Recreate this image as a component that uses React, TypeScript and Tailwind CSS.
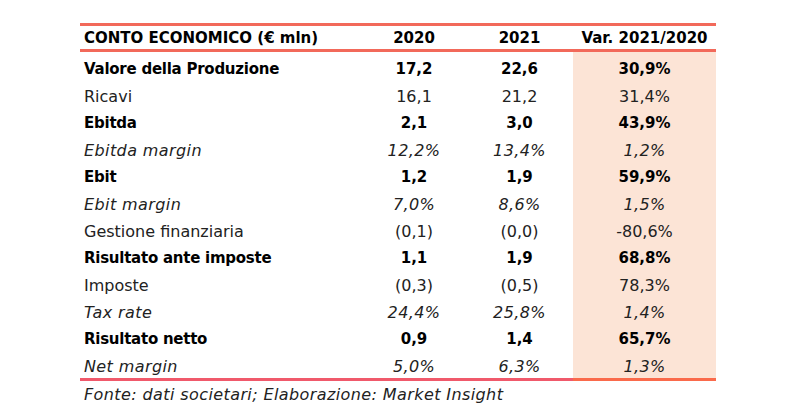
import React from "react";

type Row = { label: string; a: string; b: string; v: string; kind: "bold" | "normal" | "italic" };

const rows: Row[] = [
  { label: "Valore della Produzione", a: "17,2", b: "22,6", v: "30,9%", kind: "bold" },
  { label: "Ricavi", a: "16,1", b: "21,2", v: "31,4%", kind: "normal" },
  { label: "Ebitda", a: "2,1", b: "3,0", v: "43,9%", kind: "bold" },
  { label: "Ebitda margin", a: "12,2%", b: "13,4%", v: "1,2%", kind: "italic" },
  { label: "Ebit", a: "1,2", b: "1,9", v: "59,9%", kind: "bold" },
  { label: "Ebit margin", a: "7,0%", b: "8,6%", v: "1,5%", kind: "italic" },
  { label: "Gestione finanziaria", a: "(0,1)", b: "(0,0)", v: "-80,6%", kind: "normal" },
  { label: "Risultato ante imposte", a: "1,1", b: "1,9", v: "68,8%", kind: "bold" },
  { label: "Imposte", a: "(0,3)", b: "(0,5)", v: "78,3%", kind: "normal" },
  { label: "Tax rate", a: "24,4%", b: "25,8%", v: "1,4%", kind: "italic" },
  { label: "Risultato netto", a: "0,9", b: "1,4", v: "65,7%", kind: "bold" },
  { label: "Net margin", a: "5,0%", b: "6,3%", v: "1,3%", kind: "italic" },
];

const styleFor = (k: Row["kind"]) =>
  k === "bold"
    ? "font-bold text-[15px] text-black"
    : k === "italic"
    ? "italic text-[16px] tracking-[0.4px] text-[#222]"
    : "text-[16px] text-[#222]";

export default function App() {
  return (
    <div className="w-[796px] h-[404px] bg-white font-['DejaVu_Sans',sans-serif] text-black">
      <div className="pt-[23px] pl-[80px] w-[716px]">
        <div className="w-[636px]">
          <div className="h-[3px] bg-[#f2695a]" />
          <div className="flex h-[23px] pt-[2px] items-center text-[15px] font-bold">
            <div className="w-[282px] pl-[4px]">CONTO ECONOMICO (€ mln)</div>
            <div className="w-[104px] text-center">2020</div>
            <div className="w-[107px] text-center">2021</div>
            <div className="w-[143px] text-center">Var. 2021/2020</div>
          </div>
          <div className="h-[3px] bg-[#f2695a]" />
          <div className="flex flex-col h-[326px] pt-[4px] relative">
            <div className="absolute right-0 top-0 bottom-0 w-[143px] bg-[#fce4d6]" />
            {rows.map((r) => (
              <div key={r.label} className={`relative flex h-[27px] shrink-0 items-center ${styleFor(r.kind)}`}>
                <div className={`w-[282px] pl-[4px] ${r.kind === "bold" ? "tracking-[-0.25px]" : ""}`}>{r.label}</div>
                <div className="w-[104px] text-center">{r.a}</div>
                <div className="w-[107px] text-center">{r.b}</div>
                <div className="w-[143px] text-center">{r.v}</div>
              </div>
            ))}
          </div>
          <div className="relative flex h-[3px]">
            <div className="w-[493px] bg-[#f0596b]" />
            <div className="w-[143px] bg-[#fa6a4b]" />
          </div>
          <div className="pl-[4px] pt-[2px] text-[16px] tracking-[0.4px] italic text-[#222]">
            Fonte: dati societari; Elaborazione: Market Insight
          </div>
        </div>
      </div>
    </div>
  );
}
